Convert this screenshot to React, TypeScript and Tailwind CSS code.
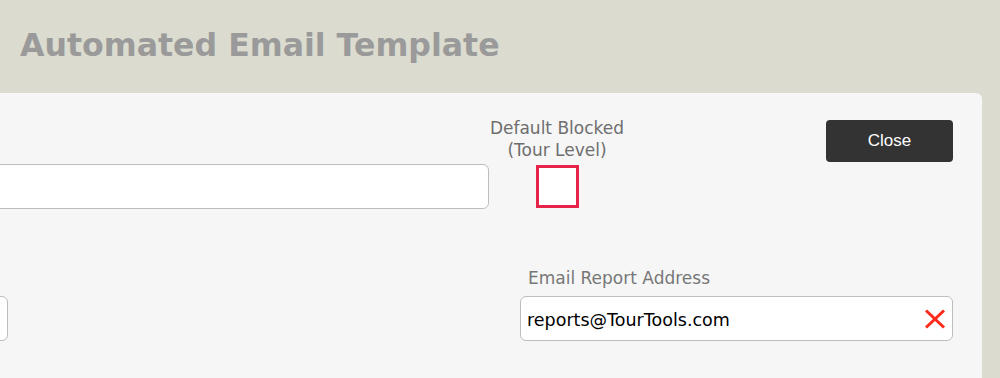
const SANS = "font-['DejaVu_Sans',Verdana,sans-serif]";

function ClearIcon() {
  return (
    <svg width="22" height="20" viewBox="0 0 22 20" fill="none" stroke="#ff2a1a" strokeWidth="3" strokeLinecap="butt">
      <line x1="2" y1="1.5" x2="20" y2="18.5" />
      <line x1="20" y1="1.5" x2="2" y2="18.5" />
    </svg>
  );
}

export default function App() {
  return (
    <div className={`h-[378px] w-[1000px] overflow-hidden bg-[#dbdccf] ${SANS}`}>
      {/* Header */}
      <div className="h-[93px] pl-5 pt-[25px]">
        <h1 className="text-[31.6px] font-bold leading-[40px] text-[#9a9a9a]">Automated Email Template</h1>
      </div>

      {/* Panel */}
      <div className="-ml-5 mr-[18px] h-[300px] rounded-tr-md bg-[#f6f6f6] pt-6">
        {/* Row 1 */}
        <div className="flex items-start">
          <div className="mt-[47px] h-[45px] w-[509px] shrink-0 rounded-md border border-[#bdbdbd] bg-white" />
          <div className="flex w-[136px] shrink-0 flex-col items-center">
            <div className="whitespace-nowrap text-center text-[17px] leading-[22px] text-[#6e6e6e]">
              Default Blocked
              <br />
              (Tour Level)
            </div>
            <div className="mt-[4px] h-[43px] w-[43px] border-[3px] border-[#e8234a] bg-white" />
          </div>
          <button className="ml-auto mr-[29px] mt-[3px] h-[42px] w-[127px] rounded-[4px] bg-[#333333] font-['Liberation_Sans',Arial,sans-serif] text-[17px] text-white">
            Close
          </button>
        </div>

        {/* Row 2 */}
        <div className="mt-[58px] flex items-start">
          <div className="mt-[29px] h-[45px] w-[28px] shrink-0 rounded-md border border-[#bdbdbd] bg-white" />
          <div className="ml-[512px] w-[433px] shrink-0">
            <div className="pl-2 text-[17px] leading-[22px] text-[#777777]">Email Report Address</div>
            <div className="mt-[7px] flex h-[45px] items-center rounded-md border border-[#bdbdbd] bg-white pl-[6px] pr-[6px]">
              <span className="flex-1 pt-[4px] text-[17.5px] text-black">reports@TourTools.com</span>
              <ClearIcon />
            </div>
          </div>
        </div>
      </div>
    </div>
  );
}
